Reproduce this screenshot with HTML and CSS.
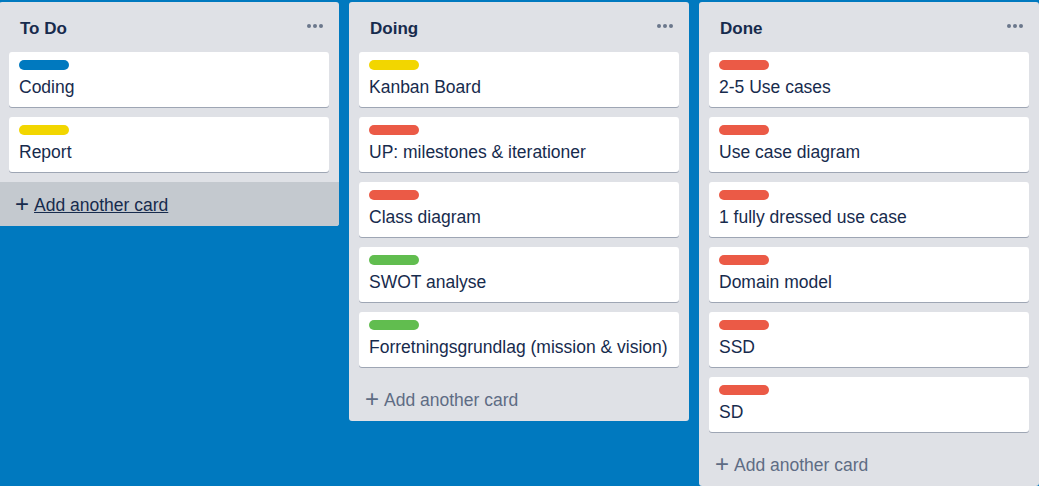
FILE: index.html
```html
<!DOCTYPE html>
<html>
<head>
<meta charset="utf-8">
<link rel="stylesheet" href="styles.css">
</head>
<body>
<div class="board">
  <div class="list">
    <div class="list-header"><span class="list-title">To Do</span><span class="dots"><i></i><i></i><i></i></span></div>
    <div class="cards">
      <div class="card"><span class="label blue"></span><span class="card-title">Coding</span></div>
      <div class="card"><span class="label yellow"></span><span class="card-title">Report</span></div>
    </div>
    <div class="add add-hover"><span class="plus">+</span><span class="add-text">Add another card</span></div>
  </div>
  <div class="list">
    <div class="list-header"><span class="list-title">Doing</span><span class="dots"><i></i><i></i><i></i></span></div>
    <div class="cards">
      <div class="card"><span class="label yellow"></span><span class="card-title">Kanban Board</span></div>
      <div class="card"><span class="label red"></span><span class="card-title">UP: milestones &amp; iterationer</span></div>
      <div class="card"><span class="label red"></span><span class="card-title">Class diagram</span></div>
      <div class="card"><span class="label green"></span><span class="card-title">SWOT analyse</span></div>
      <div class="card"><span class="label green"></span><span class="card-title">Forretningsgrundlag (mission &amp; vision)</span></div>
    </div>
    <div class="add"><span class="plus">+</span><span class="add-text">Add another card</span></div>
  </div>
  <div class="list">
    <div class="list-header"><span class="list-title">Done</span><span class="dots"><i></i><i></i><i></i></span></div>
    <div class="cards">
      <div class="card"><span class="label red"></span><span class="card-title">2-5 Use cases</span></div>
      <div class="card"><span class="label red"></span><span class="card-title">Use case diagram</span></div>
      <div class="card"><span class="label red"></span><span class="card-title">1 fully dressed use case</span></div>
      <div class="card"><span class="label red"></span><span class="card-title">Domain model</span></div>
      <div class="card"><span class="label red"></span><span class="card-title">SSD</span></div>
      <div class="card"><span class="label red"></span><span class="card-title">SD</span></div>
    </div>
    <div class="add"><span class="plus">+</span><span class="add-text">Add another card</span></div>
  </div>
</div>
</body>
</html>
```

FILE: styles.css
```css
html, body {
  margin: 0;
  height: 100%;
  overflow: hidden;
}
body {
  background: #0079bf;
  font-family: "Liberation Sans", Arial, sans-serif;
  color: #172b4d;
}
.board {
  display: flex;
  align-items: flex-start;
  gap: 10px;
  padding-top: 2px;
  margin-left: -1px;
}
.list {
  flex: 0 0 340px;
  width: 340px;
  background: #dfe1e6;
  border-radius: 3px;
  display: flex;
  flex-direction: column;
  overflow: hidden;
}
.list-header {
  height: 50px;
  display: flex;
  align-items: center;
  justify-content: space-between;
  padding: 0 16px 0 21px;
  box-sizing: border-box;
}
.list-title {
  font-weight: bold;
  font-size: 17px;
  color: #172b4d;
  margin-top: 4px;
}
.dots {
  display: flex;
  gap: 2px;
  margin-top: -3px;
}
.dots i {
  width: 4px;
  height: 4px;
  border-radius: 50%;
  background: #6b778c;
  display: block;
}
.cards {
  display: flex;
  flex-direction: column;
  gap: 10px;
  padding: 0 10px;
}
.card {
  background: #fff;
  border-radius: 3px;
  box-shadow: 0 1px 0 rgba(9, 30, 66, 0.3);
  height: 55px;
  box-sizing: border-box;
  padding: 8px 10px 0;
  display: flex;
  flex-direction: column;
  align-items: flex-start;
}
.label {
  display: block;
  width: 50px;
  height: 10px;
  border-radius: 5px;
}
.blue { background: #0079bf; }
.yellow { background: #f2d600; }
.red { background: #eb5a46; }
.green { background: #61bd4f; }
.card-title {
  font-size: 17.5px;
  line-height: 20px;
  margin-top: 7px;
  color: #172b4d;
}
.add {
  margin-top: 10px;
  height: 44px;
  box-sizing: border-box;
  padding: 2px 0 0 16px;
  display: flex;
  align-items: center;
  color: #5e6c84;
  font-size: 17.5px;
}
.add-hover {
  background: #c4c9cf;
  color: #172b4d;
}
.add-hover .add-text {
  text-decoration: underline;
}
.plus {
  font-size: 24px;
  line-height: 20px;
  margin-right: 5px;
  font-weight: 300;
  margin-top: -2px;
}
```
